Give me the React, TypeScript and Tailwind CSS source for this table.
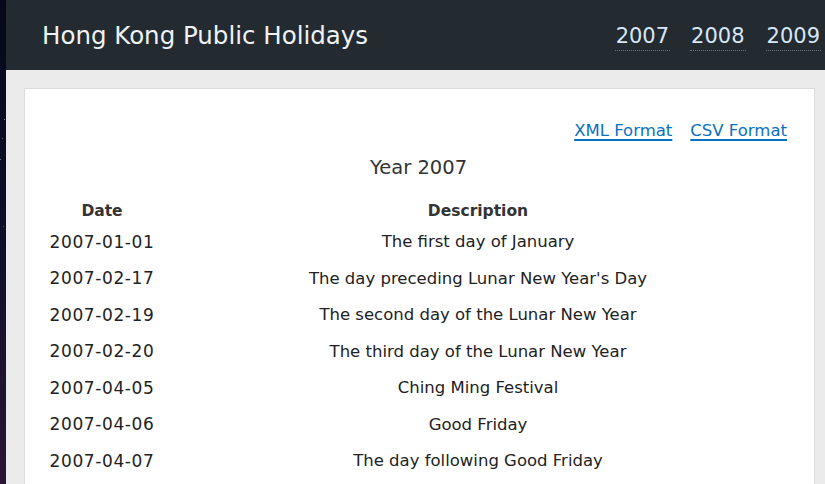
import React from "react";

const rows: [string, string][] = [
  ["2007-01-01", "The first day of January"],
  ["2007-02-17", "The day preceding Lunar New Year's Day"],
  ["2007-02-19", "The second day of the Lunar New Year"],
  ["2007-02-20", "The third day of the Lunar New Year"],
  ["2007-04-05", "Ching Ming Festival"],
  ["2007-04-06", "Good Friday"],
  ["2007-04-07", "The day following Good Friday"],
];

const font = { fontFamily: '"DejaVu Sans", Verdana, sans-serif' };

export default function App() {
  return (
    <div className="flex h-[484px] w-[825px] overflow-hidden" style={font}>
      <div className="relative w-[6px] shrink-0 bg-gradient-to-b from-[#06081a] via-[#0d0f2a] to-[#2b1433]">
        <div className="absolute left-[4px] top-[119px] h-[1px] w-[1px] bg-[#8c93b0]" />
        <div className="absolute left-[2px] top-[138px] h-[1px] w-[1px] bg-[#5d6485]" />
        <div className="absolute left-[0px] top-[159px] h-[1px] w-[1px] bg-[#6a7194]" />
        <div className="absolute left-[3px] top-[226px] h-[1px] w-[1px] bg-[#4a5070]" />
      </div>
      <div className="flex min-w-0 flex-1 flex-col bg-[#ebebeb]">
        <header className="flex h-[70px] shrink-0 items-center justify-between bg-[#232a30] pl-[36px]">
          <h1 className="pt-[3px] text-[24.5px] leading-none text-[#eef2f5]">Hong Kong Public Holidays</h1>
          <nav className="mr-[4px] flex shrink-0 gap-[20px] pt-[6px]">
            {["2007", "2008", "2009"].map((y) => (
              <a
                key={y}
                href="#"
                className="border-b border-dotted border-[#66727c] px-[1px] pb-[3px] text-[21px] leading-none text-[#d6e7f7] no-underline"
              >
                {y}
              </a>
            ))}
          </nav>
        </header>
        <div className="flex-1 pl-[18px] pr-[10px] pt-[18px]">
          <div className="h-full border border-b-0 border-[#dcdcdc] bg-white pt-[30px]">
            <div className="flex justify-end gap-[18px] pr-[27px] text-[16.5px] leading-[24px]">
              <a href="#" className="text-[#0a70c0] underline decoration-[1.5px] underline-offset-[3px]">XML Format</a>
              <a href="#" className="text-[#0a70c0] underline decoration-[1.5px] underline-offset-[3px]">CSV Format</a>
            </div>
            <div className="ml-[15px] mt-[11px] w-[752px] text-[#222]">
              <div className="h-[28px] pl-[5px] text-center text-[19.5px] leading-[28px] text-[#333]">Year 2007</div>
              <div className="mt-[16px] grid h-[26px] grid-cols-[124px_628px] items-center pt-[2px] text-center text-[15.5px] font-bold leading-none text-[#333]">
                <div>Date</div>
                <div>Description</div>
              </div>
              {rows.map(([d, desc]) => (
                <div key={d} className="grid h-[36.5px] grid-cols-[124px_628px] items-center text-center text-[16.5px] leading-none">
                  <div className="text-[17px] tracking-[0.6px]">{d}</div>
                  <div>{desc}</div>
                </div>
              ))}
            </div>
          </div>
        </div>
      </div>
    </div>
  );
}
